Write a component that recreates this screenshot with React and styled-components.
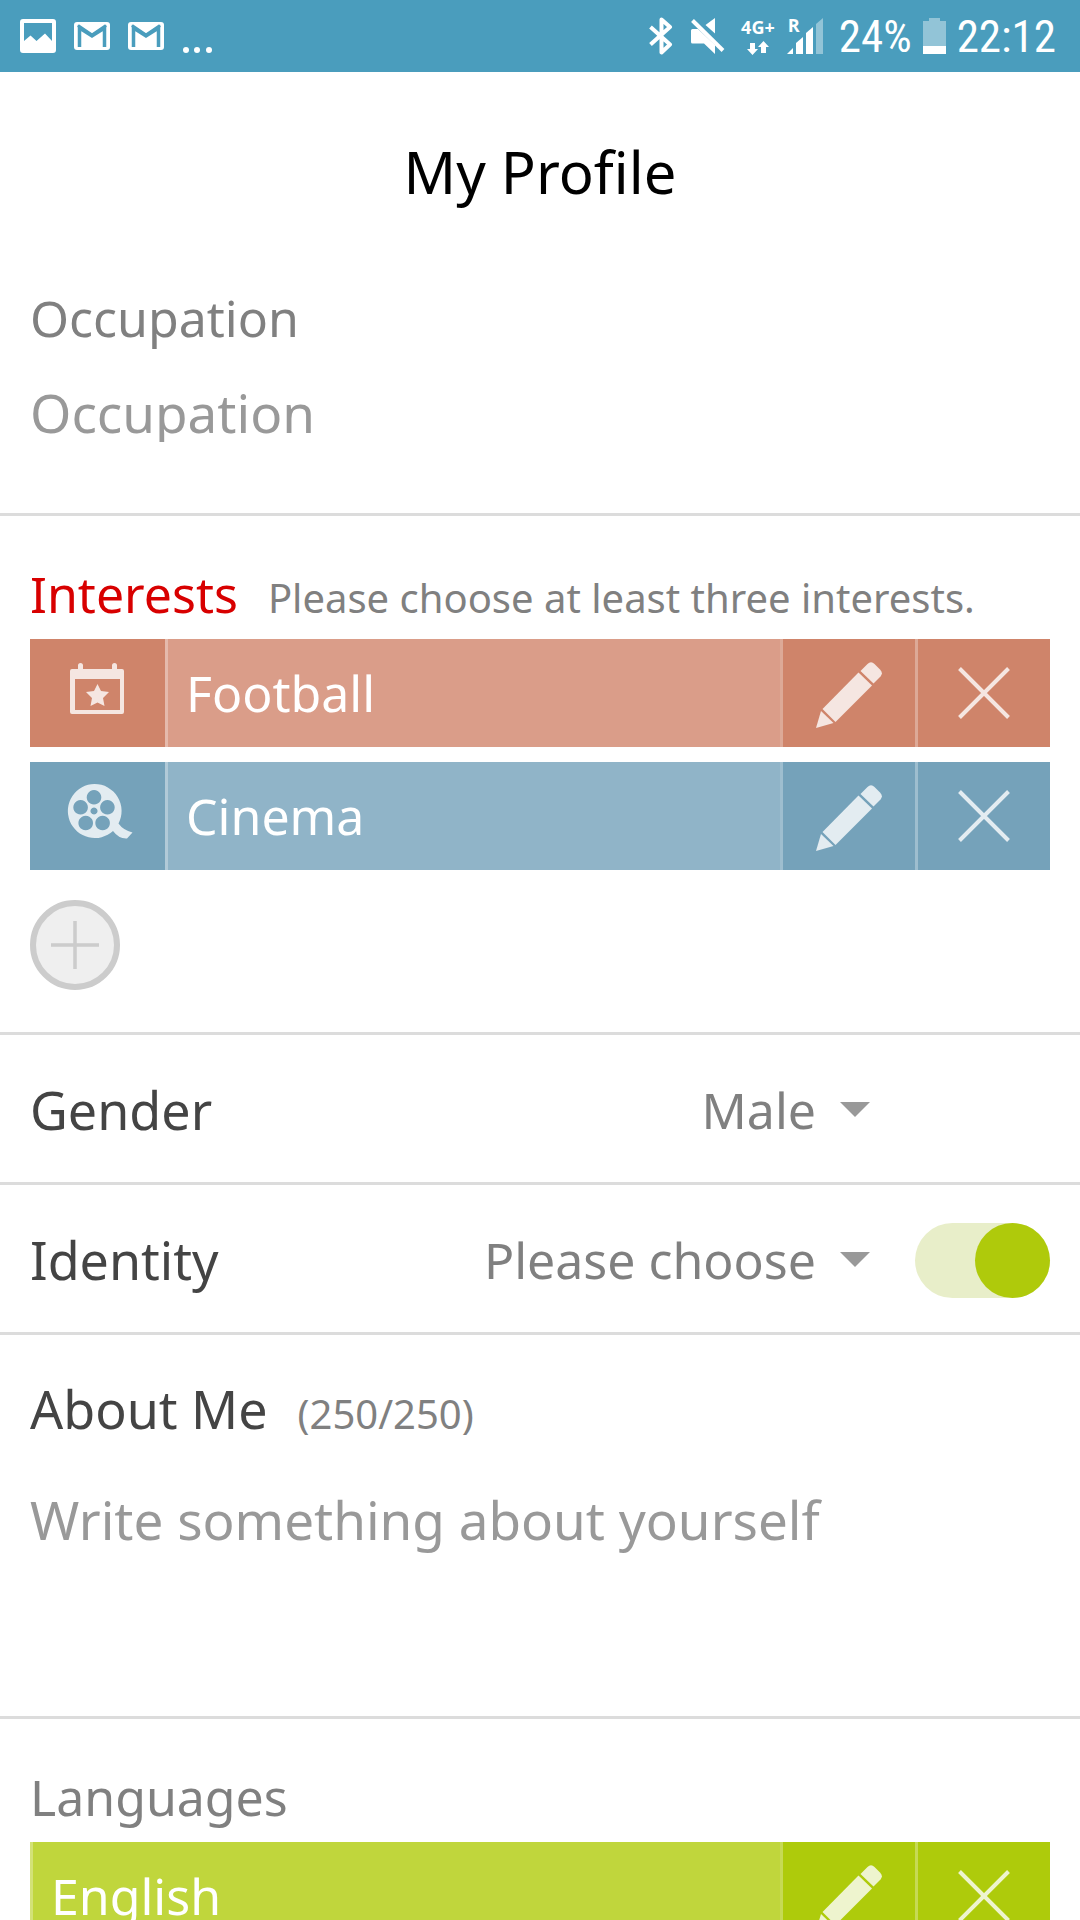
import { useState } from 'react';
import styled, { createGlobalStyle } from 'styled-components';

const GlobalStyle = createGlobalStyle`
* {
  box-sizing: border-box;
}
body {
  margin: 0;
  background: #fff;
  font-family: "Noto Sans", "Open Sans", sans-serif;
}
button, input, select, textarea {
  font-family: inherit;
  margin: 0;
  padding: 0;
  border: 0;
  background: none;
}
`

const Screen = styled.div`
height: 100vh;
display: flex;
flex-direction: column;
overflow: hidden;
`
const StatusBar = styled.header`
flex: none;
height: 72px;
padding: 0 24px 0 20px;
display: flex;
align-items: center;
justify-content: space-between;
background: #4A9DBD;
color: #fff;
`
const Notifications = styled.div`
display: flex;
align-items: center;
gap: 18px;
`
const Indicators = styled.div`
display: flex;
align-items: center;
gap: 16px;
`
const StatusGroup = styled.div`
display: flex;
align-items: center;
gap: ${props => props.$gap}px;
`
const StatusText = styled.span`
padding-top: 2px;
font-family: "Roboto Condensed", Roboto, sans-serif;
font-size: 45px;
line-height: 70px;
`
const Network = styled.div`
display: flex;
flex-direction: column;
align-items: center;
gap: 5px;
font: 700 18px/18px "Open Sans", sans-serif;
`
const Signal = styled.div`
position: relative;
height: 36px;
`
const Roaming = styled.span`
position: absolute;
left: 1px;
top: -2px;
font: 700 18px/18px "Open Sans", sans-serif;
`
const Content = styled.main`
flex: 1;
overflow-y: auto;
scrollbar-width: none;
`
const Title = styled.h1`
margin: 0;
padding: 68px 30px 36px;
font-size: 58px;
font-weight: 400;
line-height: 64px;
text-align: center;
color: #000;
`
const Section = styled.section`
padding: ${props => props.$top || 48}px 30px ${props => props.$bottom}px;
border-bottom: 3px solid #DCDCDC;
`
const Heading = styled.div`
display: flex;
align-items: baseline;
gap: 30px;
`
const Label = styled.label`
display: block;
font-size: ${props => props.$strong ? 52 : 50}px;
line-height: 60px;
color: ${props => props.$error ? '#D80000' : props.$strong ? '#444' : '#808080'};
`
const Hint = styled.span`
font-size: 40px;
line-height: 40px;
color: #808080;
`
const TextInput = styled.input`
display: block;
width: 100%;
height: 60px;
margin-top: 34px;
font-size: 53px;
color: #444;
outline: none;
&::placeholder { color: #999; opacity: 1; }
`
const TextArea = styled.textarea`
display: block;
width: 100%;
height: 180px;
margin-top: 51px;
font-size: 53px;
line-height: 60px;
color: #444;
resize: none;
outline: none;
&::placeholder { color: #999; opacity: 1; }
`
const List = styled.ul`
margin: 15px 0 0;
padding: 0;
list-style: none;
display: flex;
flex-direction: column;
gap: 15px;
`
const Item = styled.li`
display: flex;
height: 108px;
background: ${props => props.$dark};
`
const ItemIcon = styled.div`
width: 135px;
display: flex;
align-items: center;
justify-content: center;
`
const ItemName = styled.div`
flex: 1;
padding-left: 18px;
border-left: 3px solid rgba(255, 255, 255, 0.3);
background: ${props => props.$light};
font-size: 50px;
line-height: 108px;
color: #fff;
`
const ItemButton = styled.button`
width: 135px;
border-left: 3px solid rgba(255, 255, 255, 0.3);
display: flex;
align-items: center;
justify-content: center;
cursor: pointer;
`
const AddButton = styled.button`
width: 90px;
height: 90px;
margin-top: 30px;
border: 6px solid #CCC;
border-radius: 50%;
background: #EFEFEF;
display: flex;
align-items: center;
justify-content: center;
cursor: pointer;
`
const ChoiceRow = styled.section`
height: 150px;
padding: 3px 30px 0;
border-bottom: 3px solid #DCDCDC;
display: grid;
grid-template-columns: 1fr auto 135px;
align-items: center;
column-gap: 45px;
`
const Choice = styled.div`
display: flex;
align-items: center;
gap: 24px;
`
const Select = styled.select`
appearance: none;
height: 60px;
font-size: 50px;
line-height: 60px;
color: #808080;
text-align: right;
text-align-last: right;
outline: none;
`
const Switch = styled.input`
appearance: none;
width: 135px;
height: 75px;
border-radius: 38px;
background: ${props => props.checked ? '#E8EEC9' : '#E4E4E4'};
display: flex;
justify-content: ${props => props.checked ? 'flex-end' : 'flex-start'};
cursor: pointer;
&::before {
  content: '';
  width: 75px;
  height: 75px;
  border-radius: 50%;
  background: ${props => props.checked ? '#AFCA0B' : '#AAA'};
}
`

const PictureIcon = () => (
  <svg width="36" height="34" viewBox="0 0 36 34">
    <path fill="#fff" fillRule="evenodd" d="M3 0H33Q36 0 36 3V31Q36 34 33 34H3Q0 34 0 31V3Q0 0 3 0ZM4 4V22L10.500 16.500L16.500 22L25 14.500L32 22V4Z" />
  </svg>
);

const MailIcon = () => (
  <svg width="36" height="28" viewBox="0 0 36 28">
    <rect width="36" height="28" rx="3" fill="#fff" />
    <path d="M5.500 25V6L18 14L30.500 6V25" fill="none" stroke="#4A9DBD" strokeWidth="3.500" />
    <path d="M4 3.500L18 13L32 3.500" fill="none" stroke="#4A9DBD" strokeWidth="3" />
  </svg>
);

const MoreIcon = () => (
  <svg width="30" height="34" viewBox="0 0 30 34" fill="#fff">
    <circle cx="4" cy="31" r="3" />
    <circle cx="15" cy="31" r="3" />
    <circle cx="27" cy="31" r="3" />
  </svg>
);

const BluetoothIcon = () => (
  <svg width="24" height="38" viewBox="0 0 24 38">
    <path d="M1.500 10L21 27.500L12.500 35.500V2.500L21 10L1.500 27.500" fill="none" stroke="#fff" strokeWidth="4" strokeLinejoin="round" />
  </svg>
);

const MutedIcon = () => (
  <svg width="34" height="36" viewBox="0 0 34 36">
    <path fill="#fff" d="M24 0V15.500L14.500 7ZM1.500 11H7L24 27V36L13 25.500H1.500Q0 25.500 0 24V12.500Q0 11 1.500 11Z" />
    <path d="M1.500 2.500L32 32.500" stroke="#fff" strokeWidth="4" />
  </svg>
);

const DataIcon = () => (
  <svg width="22" height="14" viewBox="0 0 22 14" fill="#fff">
    <path d="M3 2H8V8H11L5.500 14L0 8H3Z" />
    <path d="M14 12V6H11L16.500 0L22 6H19V12Z" />
  </svg>
);

const SignalIcon = () => (
  <svg width="36" height="36" viewBox="0 0 36 36" fill="#fff">
    <path d="M0 36L6 30V36Z" />
    <path d="M9 36V25L16 19V36Z" />
    <path d="M19 36V15L26 9V36Z" />
    <path d="M29 36V6L36 0V36Z" opacity="0.4" />
  </svg>
);

const BatteryIcon = () => (
  <svg width="23" height="36" viewBox="0 0 23 36" fill="#fff">
    <path d="M6 0H17V3H23V28H0V3H6Z" opacity="0.4" />
    <path d="M0 28H23V36H0Z" />
  </svg>
);

const EventIcon = () => (
  <svg width="72" height="66" viewBox="0 0 72 66" fill="#fff" opacity="0.8">
    <path fillRule="evenodd" d="M16 9V5.500Q16 3 18.500 3T21 5.500V9H50V5.500Q50 3 52.500 3T55 5.500V9H60Q62 9 62 11V52Q62 54 60 54H10Q8 54 8 52V11Q8 9 10 9ZM13 19V50H58V19Z" />
    <path d="M35.500 24L39 31L47 32L41 38L42.500 46L35.500 42.500L28.500 46L30 38L24 32L32 31Z" />
  </svg>
);

const FilmIcon = () => (
  <svg width="72" height="66" viewBox="0 0 72 66" fill="#fff" opacity="0.8">
    <path
      fillRule="evenodd"
      d="M32.500 1A27 27 0 0 1 56.500 40.500Q61 47 70.500 49.500L65 55.500Q57 56 51 48A27 27 0 1 1 32.500 1Z
      M32 7a7.300 7.300 0 1 0 .01 0Z
      M18.600 17a7.300 7.300 0 1 0 .01 0Z
      M45.400 17a7.300 7.300 0 1 0 .01 0Z
      M23.700 32.700a7.300 7.300 0 1 0 .01 0Z
      M40.600 32.700a7.300 7.300 0 1 0 .01 0Z
      M32 24.500a3.500 3.500 0 1 0 .01 0Z"
    />
  </svg>
);

const PencilIcon = () => (
  <svg width="66" height="70" viewBox="0 -4 66 70" fill="#fff" opacity="0.8">
    <path d="M44.500 9L51.500 2Q55 -1.500 58.500 2L64 7.500Q67.500 11 64.500 14.500L57.500 21.500Z" />
    <path d="M42.500 10.500L56 23.500L19.500 60L6.500 47Z" />
    <path d="M5 49L17.500 61L0 66Z" />
  </svg>
);

const CrossIcon = () => (
  <svg width="52" height="52" viewBox="0 0 52 52" opacity="0.8">
    <path d="M1.500 1.500L50.500 50.500M50.500 1.500L1.500 50.500" stroke="#fff" strokeWidth="4" />
  </svg>
);

const PlusIcon = () => (
  <svg width="50" height="50" viewBox="0 0 50 50">
    <path d="M1 25H49M25 1V49" stroke="#CCC" strokeWidth="3.500" />
  </svg>
);

const ArrowIcon = () => (
  <svg width="30" height="17" viewBox="0 0 30 17">
    <path d="M0 0H30L15 15Z" fill="#999" />
  </svg>
);

const interests = [
  { name: 'Football', icon: <EventIcon />, dark: '#CF846A', light: '#DA9D89' },
  { name: 'Cinema', icon: <FilmIcon />, dark: '#75A2BA', light: '#90B4C8' },
];

const languages = [
  { name: 'English', dark: '#AECB0B', light: '#C0D63C' },
];

function EntryList({ entries }) {
  return (
    <List>
      {entries.map(({ name, icon, dark, light }) => (
        <Item key={name} $dark={dark}>
          {icon && <ItemIcon>{icon}</ItemIcon>}
          <ItemName $light={light}>{name}</ItemName>
          <ItemButton type="button" aria-label={`Edit ${name}`}><PencilIcon /></ItemButton>
          <ItemButton type="button" aria-label={`Remove ${name}`}><CrossIcon /></ItemButton>
        </Item>
      ))}
    </List>
  );
}

export default function App() {
  const [showIdentity, setShowIdentity] = useState(true);

  return (
    <Screen>
      <GlobalStyle />
      <StatusBar>
        <Notifications>
          <PictureIcon />
          <MailIcon />
          <MailIcon />
          <MoreIcon />
        </Notifications>
        <Indicators>
          <StatusGroup $gap={18}>
            <BluetoothIcon />
            <MutedIcon />
          </StatusGroup>
          <StatusGroup $gap={12}>
            <Network>
              4G+
              <DataIcon />
            </Network>
            <Signal>
              <SignalIcon />
              <Roaming>R</Roaming>
            </Signal>
          </StatusGroup>
          <StatusGroup $gap={11}>
            <StatusText>24%</StatusText>
            <BatteryIcon />
            <StatusText>22:12</StatusText>
          </StatusGroup>
        </Indicators>
      </StatusBar>
      <Content>
        <Title>My Profile</Title>
        <Section $bottom={71}>
          <Label htmlFor="occupation">Occupation</Label>
          <TextInput id="occupation" type="text" placeholder="Occupation" />
        </Section>
        <Section $bottom={42}>
          <Heading>
            <Label as="span" $error>Interests</Label>
            <Hint>Please choose at least three interests.</Hint>
          </Heading>
          <EntryList entries={interests} />
          <AddButton type="button" aria-label="Add interest"><PlusIcon /></AddButton>
        </Section>
        <ChoiceRow>
          <Label htmlFor="gender" $strong>Gender</Label>
          <Choice>
            <Select id="gender" defaultValue="Male">
              <option>Male</option>
              <option>Female</option>
            </Select>
            <ArrowIcon />
          </Choice>
        </ChoiceRow>
        <ChoiceRow>
          <Label htmlFor="identity" $strong>Identity</Label>
          <Choice>
            <Select id="identity">
              <option>Please choose</option>
            </Select>
            <ArrowIcon />
          </Choice>
          <Switch
            type="checkbox"
            role="switch"
            aria-label="Show identity"
            checked={showIdentity}
            onChange={e => setShowIdentity(e.target.checked)}
          />
        </ChoiceRow>
        <Section $top={44} $bottom={46}>
          <Heading>
            <Label htmlFor="about" $strong>About Me</Label>
            <Hint>(250/250)</Hint>
          </Heading>
          <TextArea id="about" placeholder="Write something about yourself" />
        </Section>
        <Section $bottom={42}>
          <Label as="span">Languages</Label>
          <EntryList entries={languages} />
        </Section>
      </Content>
    </Screen>
  );
}
